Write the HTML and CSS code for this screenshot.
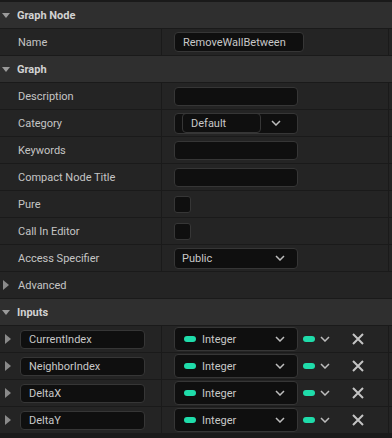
FILE: index.html
```html
<!DOCTYPE html>
<html>
<head>
  <title>Details</title>
  <link rel="stylesheet" href="styles.css">
</head>
<body>

  <div class="panel">

    <div class="section-head"><span class="caret-down"></span>Graph Node</div>
    <div class="row">
      <div class="label">Name</div>
      <div class="value"><div class="textbox wide">RemoveWallBetween</div></div>
      <div class="edge"></div>
    </div>

    <div class="section-head"><span class="caret-down"></span>Graph</div>
    <div class="row">
      <div class="label">Description</div>
      <div class="value"><div class="textbox"></div></div>
      <div class="edge"></div>
    </div>
    <div class="row">
      <div class="label">Category</div>
      <div class="value">
        <div class="combo category">
          <div class="combo-inner">Default</div>
          <svg class="chevron" width="10" height="6" viewBox="0 0 10 6"><path d="M1 1 L5 5 L9 1" /></svg>
        </div>
      </div>
      <div class="edge"></div>
    </div>
    <div class="row">
      <div class="label">Keywords</div>
      <div class="value"><div class="textbox"></div></div>
      <div class="edge"></div>
    </div>
    <div class="row">
      <div class="label">Compact Node Title</div>
      <div class="value"><div class="textbox"></div></div>
      <div class="edge"></div>
    </div>
    <div class="row">
      <div class="label">Pure</div>
      <div class="value"><div class="checkbox"></div></div>
      <div class="edge"></div>
    </div>
    <div class="row">
      <div class="label">Call In Editor</div>
      <div class="value"><div class="checkbox"></div></div>
      <div class="edge"></div>
    </div>
    <div class="row">
      <div class="label">Access Specifier</div>
      <div class="value">
        <div class="combo">
          <span class="combo-text">Public</span>
          <svg class="chevron" width="10" height="6" viewBox="0 0 10 6"><path d="M1 1 L5 5 L9 1" /></svg>
        </div>
      </div>
      <div class="edge"></div>
    </div>

    <div class="advanced"><span class="caret-right"></span>Advanced</div>

    <div class="section-head"><span class="caret-down"></span>Inputs</div>
    <div id="inputs" class="pin-list"></div>

  </div>

  <script>
    const inputs = ['CurrentIndex', 'NeighborIndex', 'DeltaX', 'DeltaY'];
    const chevron = '<svg class="chevron" width="10" height="6" viewBox="0 0 10 6"><path d="M1 1 L5 5 L9 1" /></svg>';

    function createInputRow(name) {
      const row = document.createElement('div');
      row.className = 'row pin-row';
      row.innerHTML =
        '<div class="label pin-label"><span class="caret-pin"></span><div class="textbox pin-name">' + name + '</div></div>' +
        '<div class="value">' +
          '<div class="combo pin-type"><span class="pill"></span><span class="combo-text">Integer</span>' + chevron + '</div>' +
          '<div class="container-type"><span class="pill"></span>' + chevron + '</div>' +
          '<svg class="remove" width="12" height="12" viewBox="0 0 12 12"><path d="M1 1 L11 11 M11 1 L1 11" /></svg>' +
        '</div>' +
        '<div class="edge"></div>';
      return row;
    }

    const list = document.getElementById('inputs');
    inputs.forEach(name => list.appendChild(createInputRow(name)));
  </script>
</body>
</html>
```

FILE: styles.css
```css
body {
  margin: 0;
  background-color: #1a1a1a;
  font-family: Roboto, "Open Sans", sans-serif;
  font-size: 11px;
  color: #c4c4c4;
}

.panel {
  padding-top: 2px;
  display: flex;
  flex-direction: column;
  gap: 1px;
}

.section-head {
  height: 26px;
  background-color: #2f2f2f;
  display: flex;
  align-items: center;
  font-weight: bold;
  color: #d2d2d2;
}

.caret-down {
  width: 0;
  height: 0;
  margin: 1px 7px 0 2px;
  border-left: 4.5px solid transparent;
  border-right: 4.5px solid transparent;
  border-top: 5px solid #9a9a9a;
}

.caret-right {
  width: 0;
  height: 0;
  margin: 0 9px 0 3px;
  border-top: 5px solid transparent;
  border-bottom: 5px solid transparent;
  border-left: 6px solid #8a8a8a;
}

.row {
  height: 26px;
  display: grid;
  grid-template-columns: 161px 226px 3px;
  column-gap: 1px;
}

.label,
.value,
.edge {
  background-color: #242424;
}

.label {
  display: flex;
  align-items: center;
  padding-left: 18px;
}

.value {
  display: flex;
  align-items: center;
  padding-left: 12px;
}

.advanced {
  height: 26px;
  background-color: #242424;
  display: flex;
  align-items: center;
}

.textbox {
  box-sizing: border-box;
  width: 124px;
  height: 19px;
  background-color: #0f0f0f;
  border: 1px solid #363636;
  border-radius: 4px;
  padding-left: 8px;
  display: flex;
  align-items: center;
  color: #c8c8c8;
}

.textbox.wide {
  width: 130px;
  height: 20px;
}

.checkbox {
  box-sizing: border-box;
  width: 17px;
  height: 17px;
  background-color: #0f0f0f;
  border: 1px solid #363636;
  border-radius: 3px;
}

.combo {
  box-sizing: border-box;
  width: 124px;
  height: 21px;
  background-color: #0f0f0f;
  border: 1px solid #363636;
  border-radius: 4px;
  display: flex;
  align-items: center;
  padding-left: 7px;
  color: #c8c8c8;
}

.combo-text {
  flex: 1;
}

.combo-inner {
  box-sizing: border-box;
  width: 79px;
  height: 20px;
  margin-right: 10px;
  border: 1px solid #363636;
  border-radius: 4px;
  padding-left: 8px;
  display: flex;
  align-items: center;
}

.chevron {
  margin-right: 12px;
}

.chevron path {
  fill: none;
  stroke: #bdbdbd;
  stroke-width: 1.5;
}

/* Input pin rows */
.pin-list {
  display: flex;
  flex-direction: column;
  gap: 1px;
}

.pin-row {
  height: 26px;
}

.pin-label {
  padding-left: 5px;
}

.caret-pin {
  width: 0;
  height: 0;
  margin-right: 9px;
  border-top: 5px solid transparent;
  border-bottom: 5px solid transparent;
  border-left: 6px solid #8a8a8a;
}

.pin-name {
  height: 19px;
  width: 125px;
}

.combo.pin-type {
  height: 24px;
  padding-left: 9px;
}

.pill {
  width: 12px;
  height: 6px;
  border-radius: 3px;
  background-color: #1fdcaa;
  margin-right: 6px;
}

.container-type {
  display: flex;
  align-items: center;
  margin-left: 5px;
}

.container-type .pill {
  margin-right: 5px;
}

.container-type .chevron {
  margin-right: 0;
}

.remove {
  margin-left: 22px;
}

.remove path {
  fill: none;
  stroke: #c4c4c4;
  stroke-width: 2;
}
```
